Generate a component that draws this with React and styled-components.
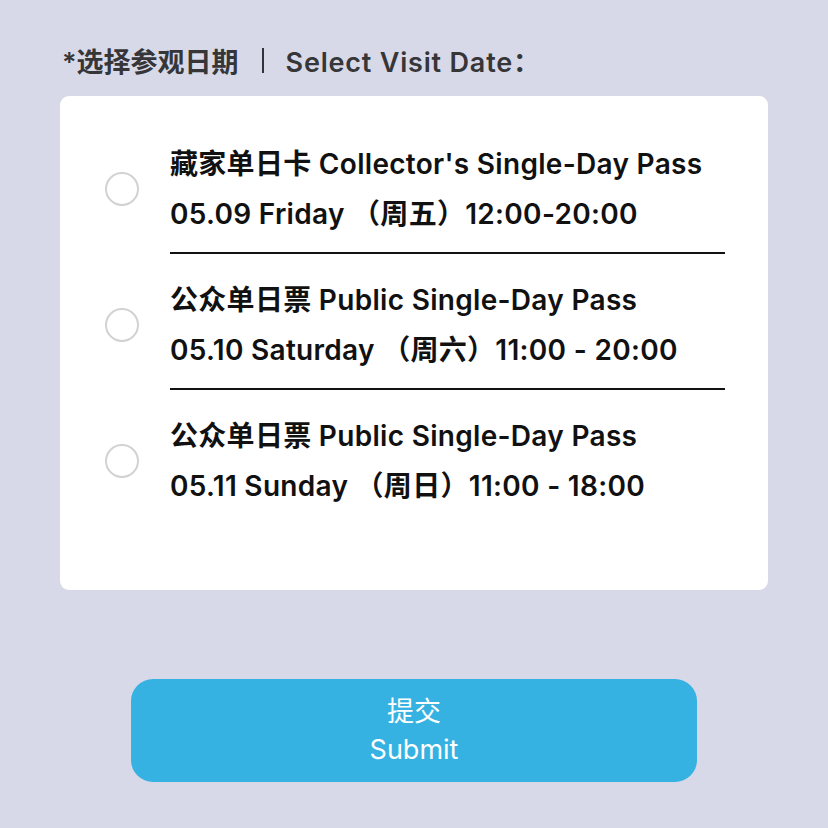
import React from 'react';
import styled, { createGlobalStyle } from 'styled-components';

const GlobalStyle = createGlobalStyle`
  html, body {
    margin: 0;
    padding: 0;
    background: #d8d9e8;
  }
  body {
    font-family: Inter, "Noto Sans CJK SC", sans-serif;
  }
`;

const Page = styled.div`
  width: 828px;
  height: 828px;
  box-sizing: border-box;
  padding: 40px 60px 0 60px;
  background: #d8d9e8;
  overflow: hidden;
`;

const Heading = styled.div`
  display: flex;
  align-items: center;
  height: 40px;
  padding-left: 2px;
  font-size: 27px;
  font-weight: 600;
  color: #363638;
  margin-bottom: 16px;
`;

const Latin = styled.span`
  letter-spacing: 0.8px;
`;

const Bar = styled.span`
  width: 2px;
  height: 25px;
  background: #333;
  margin: 0 22px 0 23px;
`;

const Card = styled.div`
  background: #fff;
  border-radius: 9px;
  height: 494px;
  box-sizing: border-box;
  padding: 22px 43px 0 45px;
`;

const Row = styled.label`
  display: flex;
  align-items: center;
`;

const Radio = styled.span`
  flex: none;
  width: 34px;
  height: 34px;
  box-sizing: border-box;
  border: 2px solid #d2d2d2;
  border-radius: 50%;
  margin-right: 31px;
  margin-top: 6px;
`;

const Body = styled.div`
  flex: 1;
  padding: 21px 0 13px;
  border-bottom: 2px solid ${p => (p.last ? 'transparent' : '#111')};
`;

const Line = styled.div`
  font-size: 28px;
  line-height: 50px;
  font-weight: 600;
  letter-spacing: 0.3px;
  color: #111;
  white-space: nowrap;
`;

const Submit = styled.button`
  display: flex;
  flex-direction: column;
  align-items: center;
  justify-content: center;
  width: 566px;
  height: 103px;
  margin: 89px 0 0 71px;
  border: none;
  border-radius: 22px;
  background: #36b2e2;
  color: #fff;
  font-family: Inter, "Noto Sans CJK SC", sans-serif;
  font-size: 27px;
  line-height: 38px;
  padding: 0;
`;

const passes = [
  { title: "藏家单日卡 Collector's Single-Day Pass", time: '05.09 Friday （周五）12:00-20:00' },
  { title: '公众单日票 Public Single-Day Pass', time: '05.10 Saturday （周六）11:00 - 20:00' },
  { title: '公众单日票 Public Single-Day Pass', time: '05.11 Sunday （周日）11:00 - 18:00' },
];

export default function App() {
  return (
    <Page>
      <GlobalStyle />
      <Heading>
        *选择参观日期<Bar /><Latin>Select Visit Date：</Latin>
      </Heading>
      <Card>
        {passes.map((p, i) => (
          <Row key={i}>
            <Radio />
            <Body last={i === passes.length - 1}>
              <Line>{p.title}</Line>
              <Line>{p.time}</Line>
            </Body>
          </Row>
        ))}
      </Card>
      <Submit>
        <span>提交</span>
        <span>Submit</span>
      </Submit>
    </Page>
  );
}
